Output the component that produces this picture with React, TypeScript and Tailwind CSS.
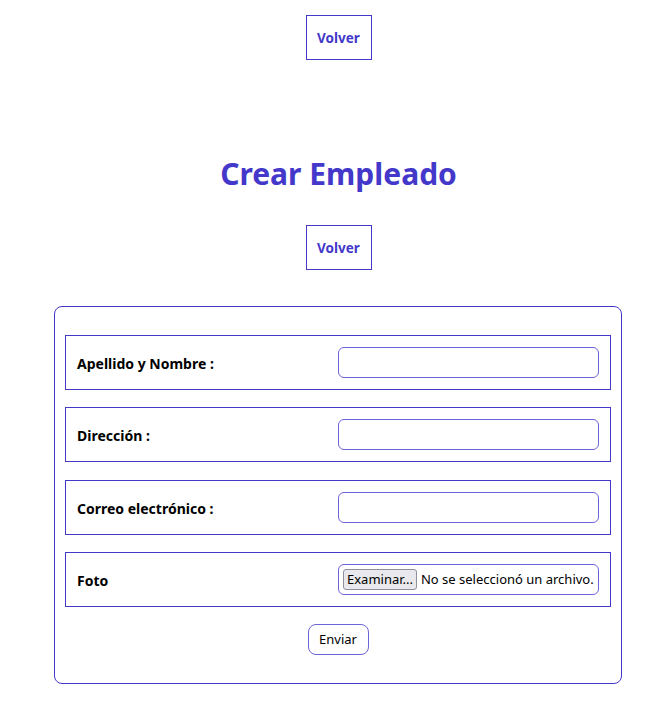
import { useState } from 'react';

const fields = [
  { label: 'Apellido y Nombre :', name: 'nombre' },
  { label: 'Dirección :', name: 'direccion' },
  { label: 'Correo electrónico :', name: 'correo' },
];

function VolverButton() {
  return (
    <button className="border border-[#4338ca] w-[66px] h-[45px] text-[13.5px] font-bold text-[#4338ca] bg-white pt-[1px]">
      Volver
    </button>
  );
}

export default function App() {
  const [fileName, setFileName] = useState('');

  return (
    <div
      className="min-h-screen bg-white pl-[24px] text-black"
      style={{ fontFamily: '"Noto Sans", "Open Sans", sans-serif' }}
    >
      <div className="flex justify-center pt-[15px]">
        <VolverButton />
      </div>

      <h1 className="mt-[94px] text-center text-[30px] leading-[40px] font-bold text-[#4338ca]">
        Crear Empleado
      </h1>

      <div className="flex justify-center mt-[31px]">
        <VolverButton />
      </div>

      <form className="ml-[30px] mr-[31px] mt-[36px] border border-[#4338ca] rounded-lg px-[10px] pt-[28px] pb-[28px]">
        <div className="flex flex-col gap-[17.33px]">
          {fields.map((f) => (
            <div key={f.name} className="grid grid-cols-2 items-center border border-[#4338ca] h-[55px] px-[11px]">
              <label className="text-[14px] font-bold pt-[2px]">{f.label}</label>
              <input
                name={f.name}
                className="h-[31px] w-full border border-[#6d63d9] rounded-md px-2 text-[13px] outline-none"
              />
            </div>
          ))}
          <div className="grid grid-cols-2 items-center border border-[#4338ca] h-[55px] px-[11px]">
            <label className="text-[14px] font-bold pt-[2px]">Foto</label>
            <label className="h-[31px] w-full border border-[#6d63d9] rounded-md flex items-center gap-[4px] px-[4px] text-[13px] cursor-pointer whitespace-nowrap overflow-hidden">
              <span className="bg-[#e9e9ed] border border-[#8f8f9d] rounded-[3px] px-[3px] leading-[19px]">
                Examinar...
              </span>
              <span>{fileName || 'No se seleccionó un archivo.'}</span>
              <input
                type="file"
                className="hidden"
                onChange={(e) => setFileName(e.target.files?.[0]?.name ?? '')}
              />
            </label>
          </div>
        </div>
        <div className="flex justify-center mt-[17px]">
          <button type="button" className="h-[31px] w-[61px] border border-[#6d63d9] rounded-lg text-[13px] bg-white">
            Enviar
          </button>
        </div>
      </form>
    </div>
  );
}
